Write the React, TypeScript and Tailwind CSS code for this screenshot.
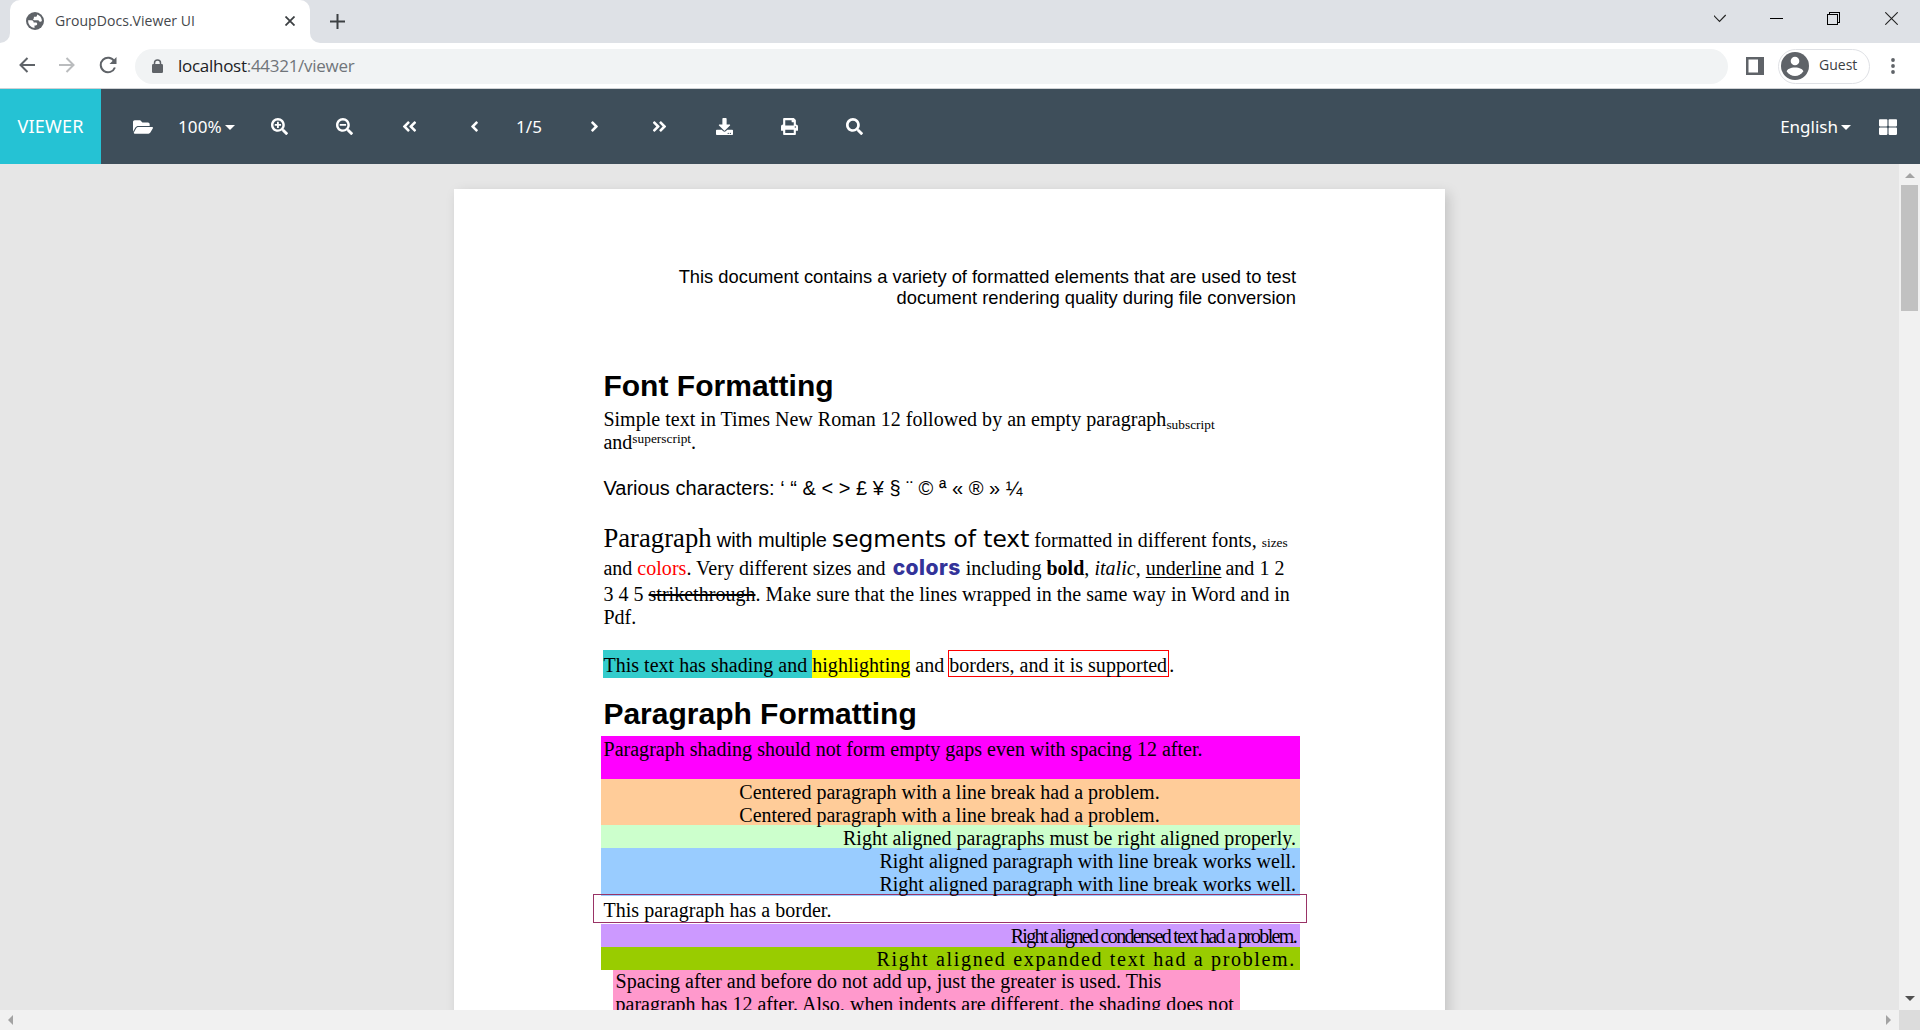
import type { ReactNode } from "react";
import {
  FaAngleDoubleLeft,
  FaAngleDoubleRight,
  FaAngleLeft,
  FaAngleRight,
  FaDownload,
  FaFolderOpen,
  FaPrint,
  FaSearch,
  FaSearchMinus,
  FaSearchPlus,
  FaThLarge,
} from "react-icons/fa";

function TitleBar() {
  return (
    <div className="flex h-[43px] shrink-0 bg-[#dee1e6]">
      <div className="flex w-[10px] items-end bg-white">
        <div className="h-[43px] w-[10px] rounded-br-[10px] bg-[#dee1e6]" />
      </div>
      <div className="flex w-[300px] bg-[#dee1e6]">
        <div className="flex h-[43px] w-[300px] items-center rounded-t-[10px] bg-white pr-[15px] pb-[1px] pl-4">
          <svg viewBox="0 0 18 18" className="h-[18px] w-[18px]">
            <circle cx="9" cy="9" r="9" fill="#5f6368" />
            <path d="M2.1 8.300h3.200c1.600 0 2.300.9 2.300 2.200h2.200c.9 0 1.400.7 1.400 1.500s-.6 1.400-1.500 1.400H8.500v2.500A7 7 0 0 1 2.100 8.300z" fill="#fff" />
            <path d="M11 2.400v.9c0 1-.7 1.500-1.500 1.500H7.900v1.300c0 .5-.3.900-.9.900.2 1 .8 1.200 1.600 1.200h2.900c1 0 1.500.5 1.800 1.400l1 .1c.8 0 1.300-.3 1.600-.9A7 7 0 0 0 11 2.400z" fill="#fff" />
          </svg>
          <span className="ml-[11px] flex-1 font-['Open_Sans','Noto_Sans',sans-serif] text-sm leading-5 tracking-[0.05px] text-[#45484c]">GroupDocs.Viewer UI</span>
          <svg viewBox="0 0 10 10" className="h-[10px] w-[10px]" stroke="#3c4043" strokeWidth="1.8">
            <path d="M.5.5l9 9M9.500.5l-9 9" />
          </svg>
        </div>
      </div>
      <div className="w-[10px] bg-white">
        <div className="h-[43px] w-[10px] rounded-bl-[10px] bg-[#dee1e6]" />
      </div>
      <svg viewBox="0 0 15 15" className="mt-[14px] ml-[10px] h-[15px] w-[15px]" stroke="#3c4043" strokeWidth="2">
        <path d="M7.500 0v15M0 7.500h15" />
      </svg>
      <div className="ml-auto flex gap-[44px] pt-3 pr-[22px]">
        <svg viewBox="0 0 13 13" className="h-[13px] w-[13px]" fill="none" stroke="#222" strokeWidth="1.100">
          <path d="M-.7 3l6.200 6.500L11.700 3" />
        </svg>
        <svg viewBox="0 0 13 13" className="-ml-px mr-px h-[13px] w-[13px]" shapeRendering="crispEdges">
          <path d="M0 6h13v1H0z" />
        </svg>
        <svg viewBox="0 0 13 13" className="-ml-px mr-px h-[13px] w-[13px]" fill="none" stroke="#000" shapeRendering="crispEdges">
          <path d="M.5 2.500h10v10H.5zM2.500 2.500V.5h10v10h-2" />
        </svg>
        <svg viewBox="0 0 13 13" className="h-[13px] w-[13px]" stroke="#222" strokeWidth="1.100">
          <path d="M.3.3l12.400 12.400M12.700.3L.3 12.700" />
        </svg>
      </div>
    </div>
  );
}

function AddressBar() {
  return (
    <div className="flex h-[46px] shrink-0 items-center border-b border-[#cfd1d4] bg-white pt-px pr-[24px] pl-[19px] font-['Open_Sans','Noto_Sans',sans-serif]">
      <div className="flex w-[116px] items-center gap-6 pb-[2px]">
        <svg viewBox="0 0 16 16" className="h-4 w-4" fill="none" stroke="#5f6368" strokeWidth="2">
          <path d="M16 8H1.500M8.500 1L1.500 8l7 7" />
        </svg>
        <svg viewBox="0 0 16 16" className="h-4 w-4" fill="none" stroke="#babcbe" strokeWidth="2">
          <path d="M0 8h14.500M7.500 1l7 7-7 7" />
        </svg>
        <svg viewBox="0 0 18 18" className="h-[18px] w-[18px]" fill="none" stroke="#5f6368" strokeWidth="2">
          <path d="M15.300 5.200A7.300 7.300 0 1 0 15.900 11.500" />
          <path d="M17.500 1v7h-7z" fill="#5f6368" stroke="none" />
        </svg>
      </div>
      <div className="flex h-[35px] w-[1593px] items-center rounded-full bg-[#f1f3f4] pb-px pl-[17px]">
        <svg viewBox="0 0 11 14" className="mt-px h-[14px] w-[11px]">
          <rect y="5" width="11" height="9" rx="1.200" fill="#5f6368" />
          <path d="M2.500 5.500V4a3 3 0 0 1 6 0v1.500" fill="none" stroke="#5f6368" strokeWidth="1.500" />
        </svg>
        <span className="ml-[15px] text-[17px] leading-6 tracking-[-0.28px] text-[#70757a]">
          <span className="text-[#202124]">localhost</span>:44321/viewer
        </span>
      </div>
      <svg viewBox="0 0 18 18" className="ml-[18px] h-[18px] w-[18px]">
        <path d="M0 0h18v18H0zM2.500 2.500v13H12v-13z" fill="#5f6368" fillRule="evenodd" />
      </svg>
      <div className="ml-[14px] flex h-[35px] w-[92px] items-center rounded-full border border-[#dfe1e5] pb-px pl-[2px]">
        <svg viewBox="0 0 28 28" className="h-7 w-7">
          <circle cx="14" cy="14" r="14" fill="#5f6368" />
          <circle cx="14" cy="9" r="4.300" fill="#fff" />
          <path d="M14 15.500c4.500 0 8.300 2 8.300 4a10 10 0 0 1-16.600 0c0-2 3.800-4 8.300-4z" fill="#fff" />
        </svg>
        <span className="ml-[10px] pb-px text-sm leading-5 text-[#3c4043]">Guest</span>
      </div>
      <svg viewBox="0 0 4 16" className="ml-auto mr-[1.5px] h-4 w-1" fill="#5f6368">
        <circle cx="2" cy="2" r="1.900" />
        <circle cx="2" cy="8" r="1.900" />
        <circle cx="2" cy="14" r="1.900" />
      </svg>
    </div>
  );
}

function Tool({ children }: { children: ReactNode }) {
  return <div className="flex w-[65px] items-center justify-center">{children}</div>;
}

function Caret() {
  return <span className="mt-px border-x-[5px] border-t-[5px] border-x-transparent border-t-white" />;
}

function Toolbar() {
  return (
    <div className="flex h-[75px] shrink-0 items-stretch bg-[#3e4e5a] font-['Noto_Sans',sans-serif] text-[17px] text-white">
      <div className="flex w-[101px] items-center justify-center bg-[#25c2d4] text-[18px] tracking-[0.2px]">VIEWER</div>
      <div className="flex w-[77px] items-center pl-8">
        <FaFolderOpen className="h-[18px] w-5" />
      </div>
      <div className="flex w-[69px] items-center gap-[3px] tracking-[0.1px]">
        100%
        <Caret />
      </div>
      <Tool><FaSearchPlus className="h-[17px] w-[17px]" /></Tool>
      <Tool><FaSearchMinus className="h-[17px] w-[17px]" /></Tool>
      <Tool><FaAngleDoubleLeft className="h-[17px] w-[17px]" /></Tool>
      <Tool><FaAngleLeft className="h-[17px] w-[17px]" /></Tool>
      <div className="flex w-[44px] items-center justify-center">1/5</div>
      <div className="w-[11px]" />
      <Tool><FaAngleRight className="h-[17px] w-[17px]" /></Tool>
      <Tool><FaAngleDoubleRight className="h-[17px] w-[17px]" /></Tool>
      <Tool><FaDownload className="h-[17px] w-[17px]" /></Tool>
      <Tool><FaPrint className="h-[17px] w-[17px]" /></Tool>
      <Tool><FaSearch className="h-[17px] w-[17px]" /></Tool>
      <div className="ml-auto flex items-center gap-[3px] pr-[28px]">
        English
        <Caret />
      </div>
      <div className="flex items-center pr-[23px]">
        <FaThLarge className="h-[18px] w-[18px]" />
      </div>
    </div>
  );
}

function Line({ children, className = "" }: { children: ReactNode; className?: string }) {
  return <div className={`h-[23px] whitespace-pre leading-[23px] ${className}`}>{children}</div>;
}

function DocumentPage() {
  return (
    <div className="ml-[454px] h-[1403px] w-[991px] shrink-0 bg-white pt-[77px] pr-[145px] pl-[147px] font-['Liberation_Serif',serif] text-[20px] text-black shadow-[4px_4px_12px_rgba(0,0,0,0.15)]">
      <div className="pr-[4px] text-right font-['Liberation_Sans',sans-serif] text-[18.33px] leading-[21px]">
        <div>This document contains a variety of formatted elements that are used to test</div>
        <div>document rendering quality during file conversion</div>
      </div>

      <div className="pl-[2.400px] tracking-[0.022px]">
        <h1 className="mt-[60px] h-[40px] font-['Liberation_Sans',sans-serif] text-[30px] leading-[36px] font-bold">Font Formatting</h1>
        <Line>
          Simple text in Times New Roman 12 followed by an empty paragraph
          <span className="relative top-[3px] text-[13.33px] leading-[0]">subscript</span>
        </Line>
        <Line>
          and<span className="relative -top-[6px] text-[13.33px] leading-[0]">superscript</span>.
        </Line>
        <Line className="mt-[23px]">
          <span className="font-['Liberation_Sans',sans-serif] leading-[0] tracking-[0.025px]">Various characters: ‘ “ &amp; &lt; &gt; £ ¥ § ¨ © ª « ® » ¼</span>
        </Line>
        <Line className="mt-[29px]">
          <span className="text-[26.67px] leading-[0]">Paragraph</span>{" "}
          <span className="font-['Liberation_Sans',sans-serif] leading-[0]">with multiple</span>{" "}
          <span className="font-['DejaVu_Sans',sans-serif] text-[23.33px] leading-[0] tracking-[-0.04px]">segments of text</span>
          {" formatted in different fonts, "}
          <span className="text-[13.33px] leading-[0]">sizes</span>
        </Line>
        <Line className="mt-[5px]">
          and <span className="text-[#ff0000]">colors</span>. Very different sizes and{" "}
          <span className="ml-[2px] font-['Inter',sans-serif] text-[21px] leading-[0] font-extrabold tracking-[0.45px] text-[#333399]">colors</span>
          {" including "}
          <b>bold</b>, <i>italic</i>, <span className="underline decoration-1 underline-offset-2">underline</span>
          <span className="-ml-px"> and 1 2</span>
        </Line>
        <Line className="mt-[3px]">
          3 4 5 <span className="line-through">strikethrough</span>. Make sure that the lines wrapped in the same way in Word and in
        </Line>
        <Line>Pdf.</Line>
        <Line className="mt-[25px]">
          <span className="bg-[#33cccc] pt-[4px] pb-[2px]">{"This text has shading and "}</span>
          <span className="bg-[#ffff00] pt-[4px] pb-[2px]">highlighting</span>
          {" and "}
          <span className="-ml-px -mr-[2px] border border-[#ff0000] pt-[3px] pr-px">borders, and it is supported</span>
          <span className="pl-[2px]">.</span>
        </Line>
        <h1 className="mt-[19px] h-[40px] font-['Liberation_Sans',sans-serif] text-[30px] leading-[36px] font-bold tracking-normal">Paragraph Formatting</h1>
      </div>

      <div className="h-[43px] bg-[#ff00ff] pt-[2px] pl-[2.5px] tracking-[0.02px]">
        <Line>Paragraph shading should not form empty gaps even with spacing 12 after.</Line>
      </div>
      <div className="h-[46px] bg-[#ffcc99] pt-[2px] pr-[2px] text-center">
        <Line>Centered paragraph with a line break had a problem.</Line>
        <Line>Centered paragraph with a line break had a problem.</Line>
      </div>
      <div className="h-[23px] bg-[#ccffcc] pt-[2px] pr-[4px] text-right tracking-[0.02px]">
        <Line>Right aligned paragraphs must be right aligned properly.</Line>
      </div>
      <div className="h-[48px] bg-[#99ccff] pt-[2px] pr-[4px] text-right">
        <Line>Right aligned paragraph with line break works well.</Line>
        <Line>Right aligned paragraph with line break works well.</Line>
      </div>
      <div className="-mt-[2px] -mr-[7px] mb-px -ml-2 h-[29px] border border-[#993366] pt-[4px] pl-[9.5px] tracking-[0.03px]">
        <Line>This paragraph has a border.</Line>
      </div>
      <div className="h-[23px] bg-[#cc99ff] pt-px pr-[4px] text-right">
        <Line className="tracking-[-1.67px]">Right aligned condensed text had a problem.</Line>
      </div>
      <div className="h-[23px] bg-[#99cc00] pt-px pr-[4px] text-right">
        <Line className="tracking-[1.67px]">Right aligned expanded text had a problem.</Line>
      </div>
      <div className="ml-[12px] w-[627px] bg-[#ff99cc] pl-[2.5px] tracking-[0.02px]">
        <Line>Spacing after and before do not add up, just the greater is used. This</Line>
        <Line>paragraph has 12 after. Also, when indents are different, the shading does not</Line>
      </div>
    </div>
  );
}

export default function App() {
  return (
    <div className="flex h-[1030px] w-[1920px] flex-col overflow-hidden bg-white">
      <TitleBar />
      <AddressBar />
      <Toolbar />
      <div className="flex h-[846px] shrink-0">
        <div className="h-[846px] w-[1899px] overflow-hidden bg-[#e6e6e6] pt-[25px]">
          <DocumentPage />
        </div>
        <div className="flex w-[21px] flex-col items-center bg-[#f1f1f1] pt-[9px] pb-[9px]">
          <span className="border-x-[5px] border-b-[5px] border-x-transparent border-b-[#a3a3a3]" />
          <div className="mt-[7px] h-[126px] w-[17px] bg-[#c1c1c1]" />
          <span className="mt-auto border-x-[5px] border-t-[5px] border-x-transparent border-t-[#505050]" />
        </div>
      </div>
      <div className="flex h-[20px] shrink-0 bg-[#f1f1f1]">
        <div className="flex flex-1 items-center justify-between px-2">
          <span className="border-y-[5px] border-r-[5px] border-y-transparent border-r-[#a3a3a3]" />
          <span className="border-y-[5px] border-l-[5px] border-y-transparent border-l-[#a3a3a3]" />
        </div>
        <div className="w-[21px] bg-[#dcdcdc]" />
      </div>
    </div>
  );
}
